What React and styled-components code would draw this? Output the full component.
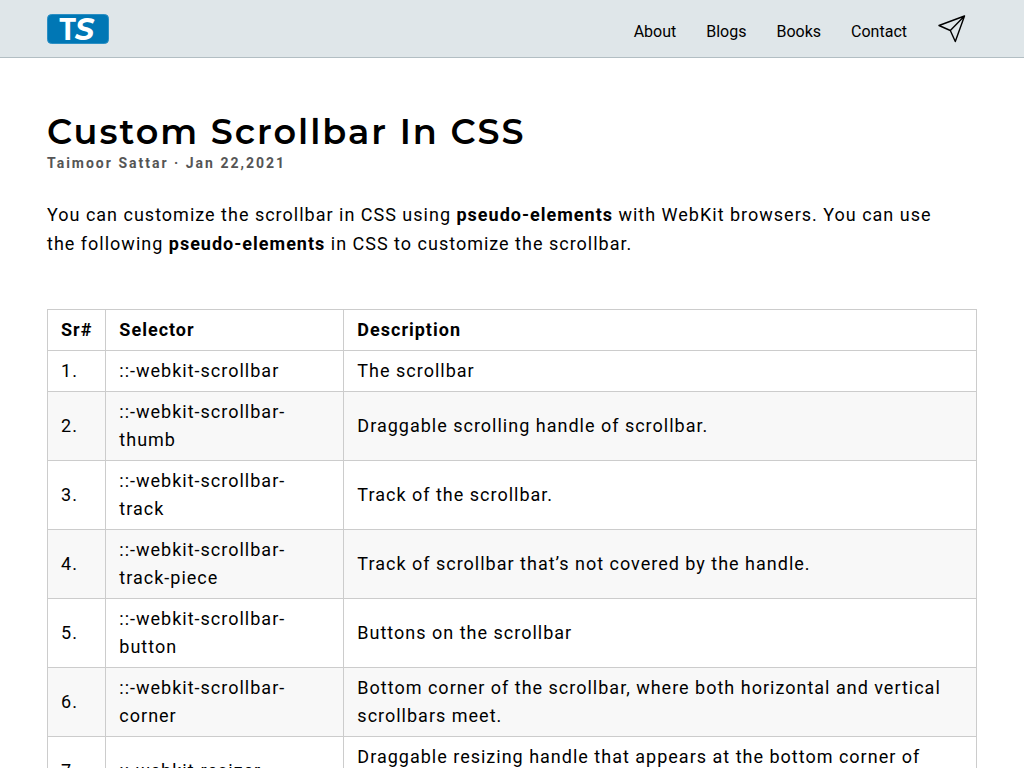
import React from "react";
import styled, { createGlobalStyle } from "styled-components";

const GlobalStyle = createGlobalStyle`
  *, *::before, *::after { box-sizing: border-box; }
  body {
    margin: 0;
    background: #fff;
    color: #000;
    font-family: Roboto, "Liberation Sans", sans-serif;
    font-size: 18px;
  }
`;

const Header = styled.header`
  display: flex;
  align-items: center;
  justify-content: space-between;
  height: 58px;
  padding: 0 58px 0 47px;
  background: #dfe6e9;
  border-bottom: 1px solid #b2bec3;
`;

const LogoLink = styled.a`
  display: flex;
`;

const Nav = styled.nav`
  display: flex;
  align-items: center;
  gap: 30px;
`;

const NavLink = styled.a`
  color: #000;
  font-size: 16px;
  line-height: 24px;
  padding-top: 6px;
  text-decoration: none;
`;

const IconLink = styled.a`
  display: flex;
  color: #000;
`;

const Main = styled.main`
  padding: 53px 47px;
`;

const Title = styled.h1`
  margin: 0;
  font-family: Montserrat, Lato, sans-serif;
  font-size: 35px;
  font-weight: 600;
  line-height: 42px;
  letter-spacing: 2px;
`;

const Byline = styled.p`
  margin: 0;
  color: #555;
  font-size: 14px;
  font-weight: 700;
  line-height: 20px;
  letter-spacing: 2px;
`;

const Intro = styled.p`
  margin: 27px 0 51px;
  padding-right: 16px;
  line-height: 29px;
  letter-spacing: 1px;
`;

const Table = styled.table`
  width: 100%;
  border-collapse: collapse;
  line-height: 28px;
  letter-spacing: 1px;
`;

const Row = styled.tr`
  background: ${(p) => (p.$shaded ? "#f8f8f8" : "#fff")};
`;

const HeadCell = styled.th`
  width: ${(p) => p.$width || "auto"};
  padding: 6px 13px;
  border: 1px solid #ccc;
  text-align: left;
  font-weight: 700;
`;

const Cell = styled.td`
  padding: 6px 16px 6px 13px;
  border: 1px solid #ccc;
`;

const rows = [
  ["::-webkit-scrollbar", "The scrollbar"],
  ["::-webkit-scrollbar-thumb", "Draggable scrolling handle of scrollbar."],
  ["::-webkit-scrollbar-track", "Track of the scrollbar."],
  ["::-webkit-scrollbar-track-piece", "Track of scrollbar that’s not covered by the handle."],
  ["::-webkit-scrollbar-button", "Buttons on the scrollbar"],
  ["::-webkit-scrollbar-corner", "Bottom corner of the scrollbar, where both horizontal and vertical scrollbars meet."],
  ["::-webkit-resizer", "Draggable resizing handle that appears at the bottom corner of some elements."],
];

function Logo() {
  return (
    <svg width="62" height="30" viewBox="0 0 62 30" role="img" aria-label="TS">
      <rect x="0.5" y="0.5" width="61" height="29" rx="4" fill="#0077b5" stroke="#2b8fc4" />
      <g fill="#fff" fontSize="30">
        <text x="12" y="26" fontFamily="'Open Sans', sans-serif" fontWeight="700">T</text>
        <text x="28" y="26" fontFamily="Montserrat, sans-serif" fontWeight="700" fontStyle="italic">S</text>
      </g>
    </svg>
  );
}

function PaperPlane() {
  return (
    <svg width="29" height="28" viewBox="-1 0 29 28" fill="none" stroke="currentColor" strokeWidth="1.4" strokeLinejoin="round" aria-hidden="true">
      <path d="M26.5 1 L1 10.5 L12.3 15.5 L17.3 26.5 Z M26.5 1 L12.3 15.5" />
    </svg>
  );
}

export default function App() {
  return (
    <>
      <GlobalStyle />
      <Header>
        <LogoLink href="#home"><Logo /></LogoLink>
        <Nav>
          <NavLink href="#about">About</NavLink>
          <NavLink href="#blogs">Blogs</NavLink>
          <NavLink href="#books">Books</NavLink>
          <NavLink href="#contact">Contact</NavLink>
          <IconLink href="#subscribe" aria-label="Subscribe"><PaperPlane /></IconLink>
        </Nav>
      </Header>
      <Main>
        <Title>Custom Scrollbar In CSS</Title>
        <Byline>Taimoor Sattar · Jan 22,2021</Byline>
        <Intro>
          You can customize the scrollbar in CSS using <strong>pseudo-elements</strong> with
          WebKit browsers. You can use the following <strong>pseudo-elements</strong> in CSS to
          customize the scrollbar.
        </Intro>
        <Table>
          <thead>
            <Row>
              <HeadCell scope="col">Sr#</HeadCell>
              <HeadCell scope="col" $width="238px">Selector</HeadCell>
              <HeadCell scope="col">Description</HeadCell>
            </Row>
          </thead>
          <tbody>
            {rows.map(([selector, description], i) => (
              <Row key={selector} $shaded={i % 2 === 1}>
                <Cell>{i + 1}.</Cell>
                <Cell>{selector}</Cell>
                <Cell>{description}</Cell>
              </Row>
            ))}
          </tbody>
        </Table>
      </Main>
    </>
  );
}
